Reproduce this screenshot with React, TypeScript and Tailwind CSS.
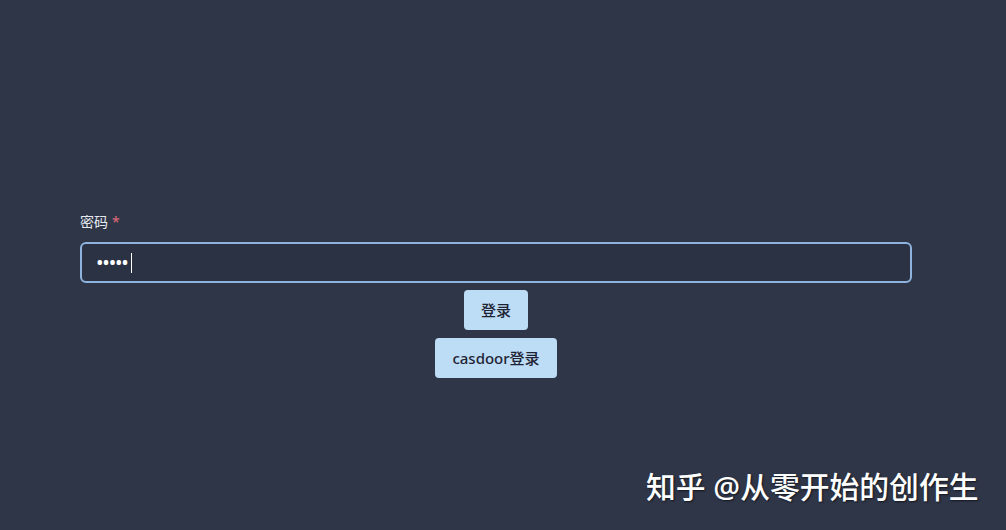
import React, { useState } from 'react';

const font = { fontFamily: '"Noto Sans", "Noto Sans CJK SC", sans-serif' };

export default function App() {
  const [password, setPassword] = useState('•••••');

  return (
    <div className="relative flex h-[530px] w-[1006px] flex-col bg-[#2f3648] text-white" style={font}>
      <form className="flex flex-col pl-[80px] pr-[94px] pt-[212px]" onSubmit={(e) => e.preventDefault()}>
        <label className="flex items-center gap-1 text-[14px] leading-[20px] text-[#e6e9ef]">
          密码 <span className="text-[#e26b7a]">*</span>
        </label>
        <div className="mt-[10px] flex h-[41px] items-center rounded-[6px] border-2 border-[#8db3de] bg-[#2b3243] px-[14px]">
          <span className="text-[20px] leading-[20px] tracking-[-1.2px] text-white">{password}</span>
          <span className="ml-[3px] h-[20px] w-px bg-white" />
        </div>
        <div className="mt-[7px] flex flex-col items-center gap-[8px]">
          <button
            type="submit"
            className="h-[40px] w-[64px] rounded-[4px] bg-[#bddcf5] text-[15px] font-medium text-[#1d2333]"
            onClick={() => setPassword(password)}
          >
            登录
          </button>
          <button type="button" className="h-[40px] w-[122px] rounded-[4px] bg-[#bddcf5] text-[15px] font-medium text-[#1d2333]">
            casdoor登录
          </button>
        </div>
      </form>
      <div className="absolute left-[646px] top-[467px] text-[29.8px] font-medium leading-[40px] text-white [text-shadow:1px_1px_2px_rgba(0,0,0,0.6)]">
        知乎 @从零开始的创作生
      </div>
    </div>
  );
}
